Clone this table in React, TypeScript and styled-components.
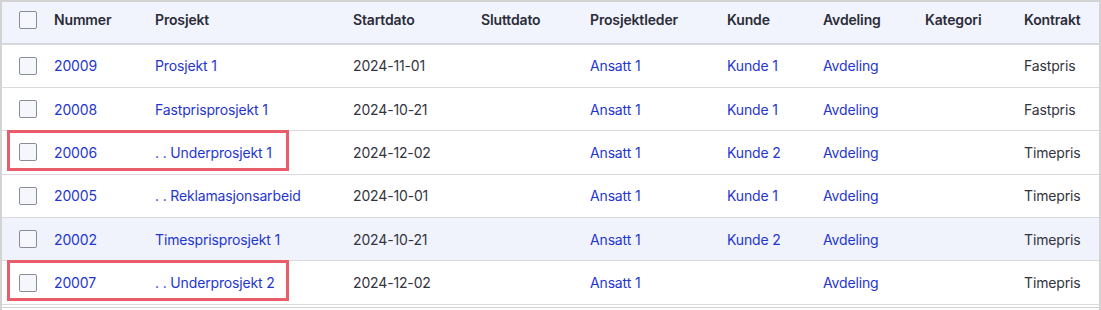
import React from 'react';
import styled, {createGlobalStyle} from 'styled-components';

const GlobalStyle = createGlobalStyle`
	body {
		margin: 0;
		background: #ffffff;
		font-family: Inter, "Noto Sans", sans-serif;
	}
`;

const Frame = styled.div`
	width: 1101px;
	height: 310px;
	box-sizing: border-box;
	border: 2px solid #d3d3d3;
	border-bottom: none;
	overflow: hidden;
`;

const Table = styled.table`
	width: 100%;
	border-collapse: collapse;
	table-layout: fixed;
	font-size: 14px;
	letter-spacing: -0.15px;
	color: #33343d;
	border-bottom: 1px solid #d3d3d3;
`;

const HeadRow = styled.tr`
	height: 42px;
	background: #f1f4fd;
	border-bottom: 2px solid #d6d8de;
`;

const Th = styled.th`
	text-align: left;
	font-weight: 600;
	color: #2b2c38;
	padding: 0 0 6px 0;
	white-space: nowrap;
`;

const Row = styled.tr<{$hover?: boolean}>`
	height: 43.4px;
	background: ${(p) => (p.$hover ? '#f0f3fc' : '#ffffff')};
	border-bottom: 1px solid #d9d9de;
`;

const Td = styled.td`
	padding: 0;
	white-space: nowrap;
`;

const BoxCell = styled.td<{$head?: boolean}>`
	padding: ${(p) => (p.$head ? '0 0 6px 17px' : '0 0 0 17px')};
	position: relative;
`;

const Check = styled.span`
	display: block;
	width: 16px;
	height: 16px;
	border: 1px solid #878c98;
	border-radius: 2px;
	background: #f5f7fc;
`;

const Link = styled.a`
	color: #1f36cf;
	text-decoration: none;
`;

const Highlight = styled.span`
	position: absolute;
	left: 5px;
	top: -1px;
	width: 282px;
	height: 41px;
	box-sizing: border-box;
	border: 3px solid #e95c69;
	pointer-events: none;
`;

const Track = styled.div`
	height: 2px;
	margin-top: 2px;
	border-top: 1px solid #d3d3d3;
`;

type Item = {
	nr: string;
	name: string;
	start: string;
	leader: string;
	customer: string;
	dept: string;
	contract: string;
	hover?: boolean;
	marked?: boolean;
};

const rows: Item[] = [
	{nr: '20009', name: 'Prosjekt 1', start: '2024-11-01', leader: 'Ansatt 1', customer: 'Kunde 1', dept: 'Avdeling', contract: 'Fastpris'},
	{nr: '20008', name: 'Fastprisprosjekt 1', start: '2024-10-21', leader: 'Ansatt 1', customer: 'Kunde 1', dept: 'Avdeling', contract: 'Fastpris'},
	{nr: '20006', name: '. . Underprosjekt 1', start: '2024-12-02', leader: 'Ansatt 1', customer: 'Kunde 2', dept: 'Avdeling', contract: 'Timepris', marked: true},
	{nr: '20005', name: '. . Reklamasjonsarbeid', start: '2024-10-01', leader: 'Ansatt 1', customer: 'Kunde 1', dept: 'Avdeling', contract: 'Timepris'},
	{nr: '20002', name: 'Timesprisprosjekt 1', start: '2024-10-21', leader: 'Ansatt 1', customer: 'Kunde 2', dept: 'Avdeling', contract: 'Timepris', hover: true},
	{nr: '20007', name: '. . Underprosjekt 2', start: '2024-12-02', leader: 'Ansatt 1', customer: '', dept: 'Avdeling', contract: 'Timepris', marked: true},
];

// column widths follow the x positions in the screenshot
const widths = [52, 101, 198, 128, 109, 137, 96, 102, 99, 75];

export default function App() {
	return (
		<>
			<GlobalStyle />
			<Frame>
				<Table>
					<colgroup>
						{widths.map((w, i) => (
							<col key={i} style={{width: w}} />
						))}
					</colgroup>
					<thead>
						<HeadRow>
							<BoxCell as="th" $head>
								<Check />
							</BoxCell>
							<Th>Nummer</Th>
							<Th>Prosjekt</Th>
							<Th>Startdato</Th>
							<Th>Sluttdato</Th>
							<Th>Prosjektleder</Th>
							<Th>Kunde</Th>
							<Th>Avdeling</Th>
							<Th>Kategori</Th>
							<Th>Kontrakt</Th>
						</HeadRow>
					</thead>
					<tbody>
						{rows.map((r) => (
							<Row key={r.nr} $hover={r.hover}>
								<BoxCell>
									<Check />
									{r.marked && <Highlight />}
								</BoxCell>
								<Td><Link>{r.nr}</Link></Td>
								<Td><Link>{r.name}</Link></Td>
								<Td>{r.start}</Td>
								<Td></Td>
								<Td><Link>{r.leader}</Link></Td>
								<Td><Link>{r.customer}</Link></Td>
								<Td><Link>{r.dept}</Link></Td>
								<Td></Td>
								<Td>{r.contract}</Td>
							</Row>
						))}
					</tbody>
				</Table>
				<Track />
			</Frame>
		</>
	);
}
